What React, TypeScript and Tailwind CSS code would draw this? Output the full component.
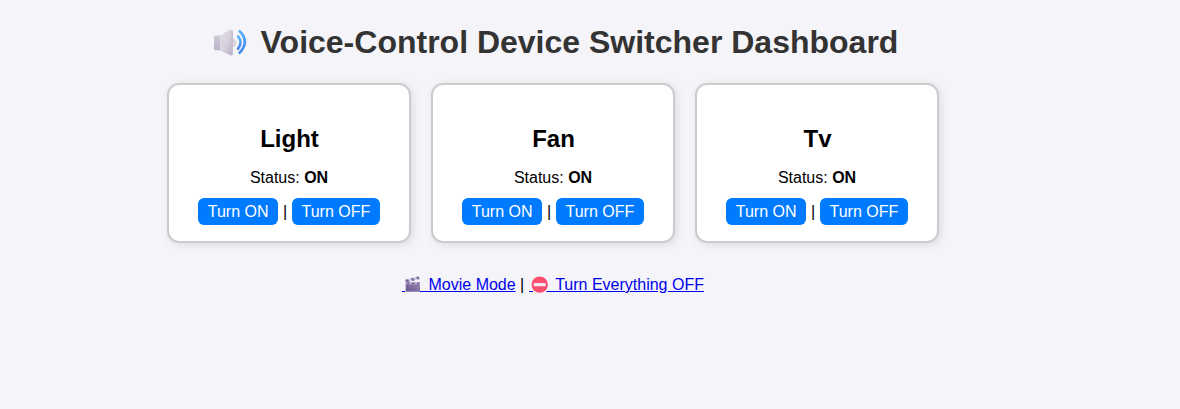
import React from 'react';

function SpeakerIcon() {
  return (
    <svg className="block h-[33px] w-[44px] shrink-0" viewBox="0 0 44 33" aria-hidden="true">
      <defs>
        <linearGradient id="cone" x1="0" y1="0" x2="1" y2="1">
          <stop offset="0" stopColor="#e3e0e6" />
          <stop offset="0.5" stopColor="#d6d1dc" />
          <stop offset="1" stopColor="#b9adc6" />
        </linearGradient>
        <linearGradient id="box" x1="0" y1="0" x2="0" y2="1">
          <stop offset="0" stopColor="#cfcad3" />
          <stop offset="1" stopColor="#bdb2c9" />
        </linearGradient>
        <linearGradient id="wave" x1="0" y1="0" x2="0" y2="1">
          <stop offset="0" stopColor="#5aaefa" />
          <stop offset="1" stopColor="#3f87ee" />
        </linearGradient>
      </defs>
      <path d="M7.300 9.500H14v14.800H7.300A1.300 1.300 0 0 1 6 23V10.800a1.300 1.300 0 0 1 1.300-1.300z" fill="url(#box)" />
      <path d="M24.500 12.700a4.200 4.200 0 0 1 0 8.400z" fill="#dcd8e1" />
      <path d="M12 9.500 21.500 4.100q3.300-1.500 3.300 2v21.500q0 3-3.300 1.400L12 24.300z" fill="url(#cone)" />
      <path d="M23.300 3.900q1.700.2 1.700 2.500v20.700q0 2.200-1.700 2.200z" fill="#c6bdd0" />
      <path d="M30 10.300Q35.200 16.300 30 22.800" fill="none" stroke="url(#wave)" strokeWidth="2.500" strokeLinecap="round" />
      <path d="M31.700 5.300Q42 15.700 31.700 26.700" fill="none" stroke="url(#wave)" strokeWidth="2.700" strokeLinecap="round" />
    </svg>
  );
}

function ClapperIcon() {
  return (
    <svg className="inline-block h-[18px] w-[22px] align-[-3px]" viewBox="0 0 22 18" aria-hidden="true">
      <defs>
        <linearGradient id="slate" x1="0" y1="1" x2="1" y2="0">
          <stop offset="0" stopColor="#685491" />
          <stop offset="1" stopColor="#9a8ab4" />
        </linearGradient>
      </defs>
      <path d="M0 16.500h3M18 16.500h4" stroke="#0000ee" strokeWidth="1" />
      <path d="M3.700 7.500H18v9.200H3.700z" fill="url(#slate)" />
      <path d="M3.300 4.800 17 1.300l.8 2.700L4 7.500z" fill="#cfc7e0" />
      <path d="m3.300 4.800 2.400-.6L7.500 6.600 4 7.500zM8.800 3.400l2.200-.6 1.700 2.500-2.200.6zM14 2.100l2.200-.6L17.700 4l-2 .5z" fill="#7a669f" />
      <path d="M3.700 7.500H18v2H3.700z" fill="#bfb4d3" />
      <path d="M5.500 7.500h2.600l-1.300 2H4.200zM10.500 7.500h2.600l-1.300 2H9.200zM15.500 7.500H18l-1.200 2h-2.600z" fill="#7a669f" />
    </svg>
  );
}

function StopIcon() {
  return (
    <svg className="inline-block h-[18px] w-[22px] align-[-3px]" viewBox="0 0 22 18" aria-hidden="true">
      <path d="M0 16.500h4M17.500 16.500H22" stroke="#0000ee" strokeWidth="1" />
      <circle cx="10.700" cy="9.600" r="8.200" fill="#fb4e70" />
      <rect x="4.700" y="8" width="12" height="3.200" rx=".7" fill="#f4eaf5" />
    </svg>
  );
}

function SwitchLink({ label }: { label: string }) {
  return (
    <a href="#" className="rounded-[6px] bg-[#007bff] px-[10px] py-[5px] text-white no-underline">
      {label}
    </a>
  );
}

function DeviceCard({ name }: { name: string }) {
  return (
    <section className="h-[160px] w-[244px] rounded-[12px] border-2 border-[#cccccc] bg-white pt-[40px] text-center shadow-[2px_2px_10px_rgba(0,0,0,0.1)]">
      <h2 className="pl-[1px] text-[24px] leading-[27px] font-bold">{name}</h2>
      <p className="mt-[17px] leading-[18px]">
        Status: <strong>ON</strong>
      </p>
      <div className="mt-[16px] leading-[18px]">
        <SwitchLink label="Turn ON" /> | <SwitchLink label="Turn OFF" />
      </div>
    </section>
  );
}

export default function App() {
  return (
    <div className="min-h-screen bg-[#f4f4f9] font-['Liberation_Sans',Arial,sans-serif] text-[16px] text-black">
      <main className="flex w-[1106px] flex-col items-center pt-[24px]">
        <h1 className="flex h-[37px] items-center text-[32px] leading-[37px] font-bold text-[#333333]">
          <SpeakerIcon />
          <span className="ml-[9px]">Voice-Control Device Switcher Dashboard</span>
        </h1>
        <div className="mt-[22px] flex gap-[20px]">
          <DeviceCard name="Light" />
          <DeviceCard name="Fan" />
          <DeviceCard name="Tv" />
        </div>
        <nav className="mt-[32px] leading-[18px] whitespace-nowrap">
          <a href="#" className="text-[#0000ee] underline"><ClapperIcon />&nbsp;Movie Mode</a>
          {' | '}
          <a href="#" className="text-[#0000ee] underline"><StopIcon />&nbsp;Turn Everything OFF</a>
        </nav>
      </main>
    </div>
  );
}
